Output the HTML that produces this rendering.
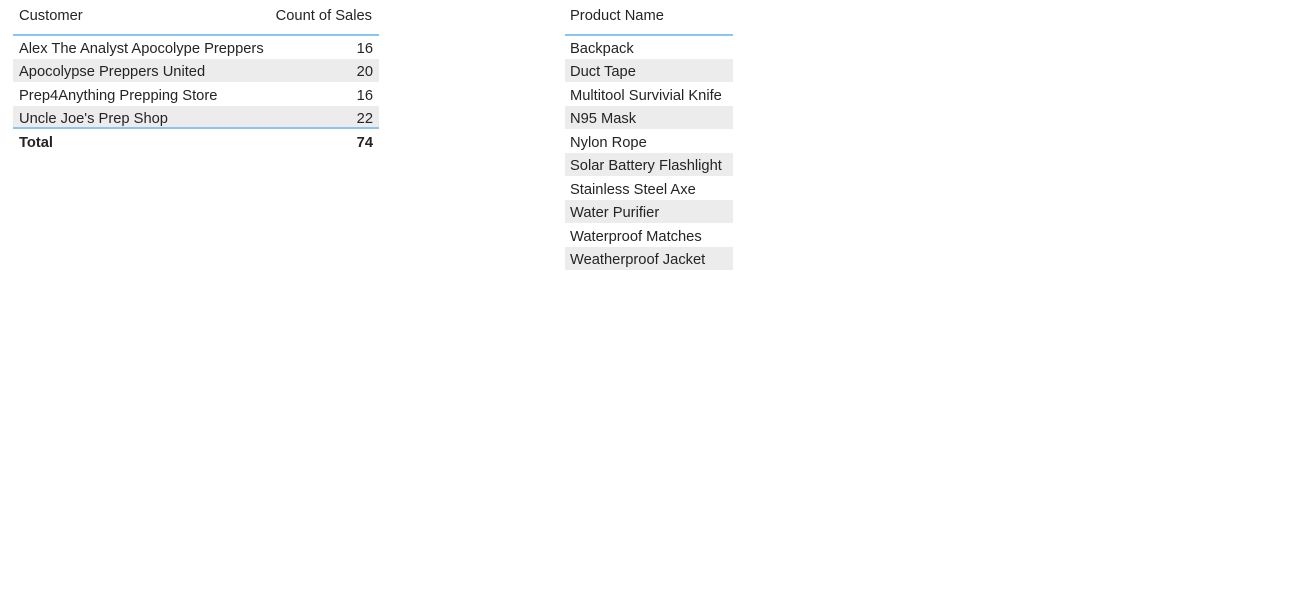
<!DOCTYPE html>
<html><head><style>
body{margin:0;width:1300px;height:611px;background:#fff;font-family:"Liberation Sans",sans-serif;font-size:14.7px;color:#252423;position:relative;overflow:hidden}
.r{position:absolute;height:23px;line-height:26px;box-sizing:border-box}
.s{background:#ececec}
.t{position:absolute;white-space:nowrap}
.line{position:absolute;height:2px;background:#8cc4f2}
</style></head><body>
<div class="t" style="left:19px;top:7px;line-height:18px">Customer</div>
<div class="t" style="right:928px;top:7px;line-height:18px">Count of Sales</div>
<div class="line" style="left:13px;width:366px;top:34px"></div>

<div class="r" style="left:13px;width:366px;top:36px"><span class="t" style="left:6px">Alex The Analyst Apocolype Preppers</span><span class="t" style="right:6px">16</span></div>
<div class="r s" style="left:13px;width:366px;top:59px"><span class="t" style="left:6px">Apocolypse Preppers United</span><span class="t" style="right:6px">20</span></div>
<div class="r" style="left:13px;width:366px;top:83px"><span class="t" style="left:6px">Prep4Anything Prepping Store</span><span class="t" style="right:6px">16</span></div>
<div class="r s" style="left:13px;width:366px;top:106px;height:22px"><span class="t" style="left:6px">Uncle Joe's Prep Shop</span><span class="t" style="right:6px">22</span></div>
<div class="line" style="left:13px;width:366px;top:127px"></div>
<div class="r" style="left:13px;width:366px;top:130px;font-weight:bold"><span class="t" style="left:6px">Total</span><span class="t" style="right:6px">74</span></div>

<div class="t" style="left:570px;top:7px;line-height:18px">Product Name</div>
<div class="line" style="left:565px;width:168px;top:34px"></div>
<div class="r" style="left:565px;width:168px;top:36px"><span class="t" style="left:5px">Backpack</span></div>
<div class="r s" style="left:565px;width:168px;top:59px"><span class="t" style="left:5px">Duct Tape</span></div>
<div class="r" style="left:565px;width:168px;top:83px"><span class="t" style="left:5px">Multitool Survivial Knife</span></div>
<div class="r s" style="left:565px;width:168px;top:106px"><span class="t" style="left:5px">N95 Mask</span></div>
<div class="r" style="left:565px;width:168px;top:130px"><span class="t" style="left:5px">Nylon Rope</span></div>
<div class="r s" style="left:565px;width:168px;top:153px"><span class="t" style="left:5px">Solar Battery Flashlight</span></div>
<div class="r" style="left:565px;width:168px;top:177px"><span class="t" style="left:5px">Stainless Steel Axe</span></div>
<div class="r s" style="left:565px;width:168px;top:200px"><span class="t" style="left:5px">Water Purifier</span></div>
<div class="r" style="left:565px;width:168px;top:224px"><span class="t" style="left:5px">Waterproof Matches</span></div>
<div class="r s" style="left:565px;width:168px;top:247px"><span class="t" style="left:5px">Weatherproof Jacket</span></div>
</body></html>
